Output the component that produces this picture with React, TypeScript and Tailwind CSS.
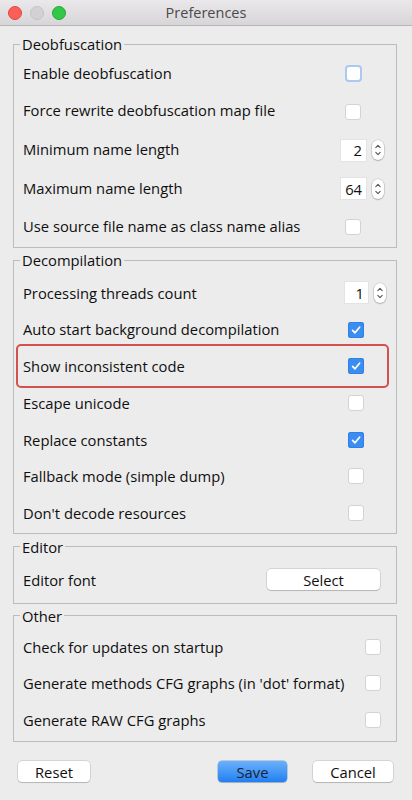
import React from "react";

function Check({ checked = false, focus = false }: { checked?: boolean; focus?: boolean }) {
  if (checked) {
    return (
      <span className="flex h-[16px] w-[16px] items-center justify-center rounded-[3px] bg-[#3b8df2] shadow-[inset_0_0_0_1px_#2f80e6]">
        <svg width="12" height="12" viewBox="0 0 12 12" fill="none">
          <path d="M2.6 6.4 L5 8.8 L9.6 3.2" stroke="white" strokeWidth="1.7" strokeLinecap="round" strokeLinejoin="round" />
        </svg>
      </span>
    );
  }
  if (focus) {
    return <span className="block h-[17px] w-[17px] rounded-[4px] border-2 border-[#a9c9ef] bg-white" />;
  }
  return <span className="block h-[16px] w-[16px] rounded-[3px] border border-[#d3d3d3] bg-white" />;
}

function Spinner({ value, wide = true }: { value: string; wide?: boolean }) {
  return (
    <div className="flex items-center gap-[6px]">
      <div
        className={
          wide
            ? "flex h-[21px] w-[25px] items-center justify-end bg-white pr-[4px] shadow-[0_0_0_1px_#e3e3e3]"
            : "flex h-[21px] w-[23px] items-center justify-end bg-white pr-[4px] shadow-[0_0_0_1px_#e3e3e3]"
        }
      >
        {value}
      </div>
      <div className="flex h-[20px] w-[12px] items-center justify-center rounded-full bg-white shadow-[0_0_0_0.5px_rgba(0,0,0,0.18),0_1px_1.5px_rgba(0,0,0,0.2)]">
        <svg width="8" height="14" viewBox="0 0 8 14" fill="none">
          <path d="M1.8 4.6 L4 2.4 L6.2 4.6" stroke="#555" strokeWidth="1.1" strokeLinecap="round" strokeLinejoin="round" />
          <path d="M1.8 9.4 L4 11.6 L6.2 9.4" stroke="#555" strokeWidth="1.1" strokeLinecap="round" strokeLinejoin="round" />
        </svg>
      </div>
    </div>
  );
}

function Legend({ children }: { children: React.ReactNode }) {
  return <legend className="ml-[6px] px-[2px] leading-[20px]">{children}</legend>;
}

export default function App() {
  return (
    <div className="h-[800px] w-[412px] overflow-hidden bg-[#ececec] font-['Open_Sans',sans-serif] text-[14.75px] text-[#0f0f0f]">
      {/* Title bar */}
      <div className="grid h-[26px] grid-cols-[1fr_auto_1fr] items-center border-b border-[#b6b6b6] bg-linear-to-b from-[#eae8ea] to-[#d7d5d7]">
        <div className="flex items-center gap-[8px] pl-[8px]">
          <span className="block h-[14px] w-[14px] rounded-full border border-[#e2463f] bg-[#fc5f57]" />
          <span className="block h-[14px] w-[14px] rounded-full border border-[#c4c4c4] bg-[#d2d2d2]" />
          <span className="block h-[14px] w-[14px] rounded-full border border-[#23a936] bg-[#33c748]" />
        </div>
        <div className="text-[14.5px] text-[#4a4a4a]">Preferences</div>
        <div />
      </div>

      <div className="pl-[13px] pr-[15px]">
        {/* Deobfuscation */}
        <fieldset className="mt-[8px] border border-[#bcbcbc]">
          <Legend>Deobfuscation</Legend>
          <div className="flex h-[38.5px] items-center justify-between pl-[9px] pr-[34.5px]">
            <span>Enable deobfuscation</span>
            <Check focus />
          </div>
          <div className="flex h-[38.5px] items-center justify-between pl-[9px] pr-[35px]">
            <span className="relative -top-[1.5px]">Force rewrite deobfuscation map file</span>
            <Check />
          </div>
          <div className="flex h-[38.5px] items-center justify-between pl-[9px] pr-[12px]">
            <span className="relative -top-[1.5px]">Minimum name length</span>
            <Spinner value="2" />
          </div>
          <div className="flex h-[38.5px] items-center justify-between pl-[9px] pr-[12px]">
            <span className="relative -top-[1px]">Maximum name length</span>
            <Spinner value="64" />
          </div>
          <div className="flex h-[38.5px] items-center justify-between pl-[9px] pr-[35px]">
            <span className="relative -top-[1px]">Use source file name as class name alias</span>
            <Check />
          </div>
        </fieldset>

        {/* Decompilation */}
        <fieldset className="mt-[2.5px] border border-[#bcbcbc]">
          <Legend>Decompilation</Legend>
          <div className="pb-[2px] pt-[4.5px]">
            <div className="flex h-[36.7px] items-center justify-between pl-[9px] pr-[10px]">
              <span>Processing threads count</span>
              <Spinner value="1" wide={false} />
            </div>
            <div className="flex h-[36.7px] items-center justify-between pl-[9px] pr-[32px]">
              <span>Auto start background decompilation</span>
              <Check checked />
            </div>
            <div className="relative flex h-[36.7px] items-center justify-between pl-[9px] pr-[32px]">
              <span>Show inconsistent code</span>
              <Check checked />
              <span className="pointer-events-none absolute -bottom-[3px] -top-[3.5px] left-[2px] right-[7px] rounded-[5px] border-2 border-[#d4514f]" />
            </div>
            <div className="flex h-[36.7px] items-center justify-between pl-[9px] pr-[32px]">
              <span>Escape unicode</span>
              <Check />
            </div>
            <div className="flex h-[36.7px] items-center justify-between pl-[9px] pr-[32px]">
              <span>Replace constants</span>
              <Check checked />
            </div>
            <div className="flex h-[36.7px] items-center justify-between pl-[9px] pr-[32px]">
              <span>Fallback mode (simple dump)</span>
              <Check />
            </div>
            <div className="flex h-[36.7px] items-center justify-between pl-[9px] pr-[32px]">
              <span>Don't decode resources</span>
              <Check />
            </div>
          </div>
        </fieldset>

        {/* Editor */}
        <fieldset className="mt-[2.5px] border border-[#bcbcbc]">
          <Legend>Editor</Legend>
          <div className="pb-[5px] pt-[5px]">
            <div className="flex h-[36px] items-center justify-between pl-[9px] pr-[16px]">
              <span>Editor font</span>
              <button className="flex h-[21px] w-[113px] items-center justify-center rounded-[4px] bg-white shadow-[0_0_0_0.5px_rgba(0,0,0,0.2),0_1px_1px_rgba(0,0,0,0.15)]">
                Select
              </button>
            </div>
          </div>
        </fieldset>

        {/* Other */}
        <fieldset className="mt-[2px] border border-[#bcbcbc]">
          <Legend>Other</Legend>
          <div className="pb-[3px] pt-[2.75px]">
            <div className="flex h-[36.5px] items-center justify-between pl-[9px] pr-[15px]">
              <span>Check for updates on startup</span>
              <Check />
            </div>
            <div className="flex h-[36.5px] items-center justify-between pl-[9px] pr-[15px]">
              <span>Generate methods CFG graphs (in 'dot' format)</span>
              <Check />
            </div>
            <div className="flex h-[36.5px] items-center justify-between pl-[9px] pr-[15px]">
              <span>Generate RAW CFG graphs</span>
              <Check />
            </div>
          </div>
        </fieldset>
      </div>

      {/* Buttons */}
      <div className="mt-[19px] flex h-[21px] items-center pl-[18px] pr-[19px]">
        <button className="flex h-[21px] w-[72px] items-center justify-center rounded-[4px] bg-white shadow-[0_0_0_0.5px_rgba(0,0,0,0.2),0_1px_1px_rgba(0,0,0,0.15)]">
          Reset
        </button>
        <button className="ml-auto flex h-[21px] w-[69px] items-center justify-center rounded-[4px] bg-linear-to-b from-[#69b1fa] to-[#1f7ff1] text-[#172233] shadow-[0_0_0_0.5px_rgba(0,60,160,0.4),0_1px_1px_rgba(0,0,0,0.15)]">
          Save
        </button>
        <button className="ml-[26px] flex h-[21px] w-[80px] items-center justify-center rounded-[4px] bg-white shadow-[0_0_0_0.5px_rgba(0,0,0,0.2),0_1px_1px_rgba(0,0,0,0.15)]">
          Cancel
        </button>
      </div>
    </div>
  );
}
